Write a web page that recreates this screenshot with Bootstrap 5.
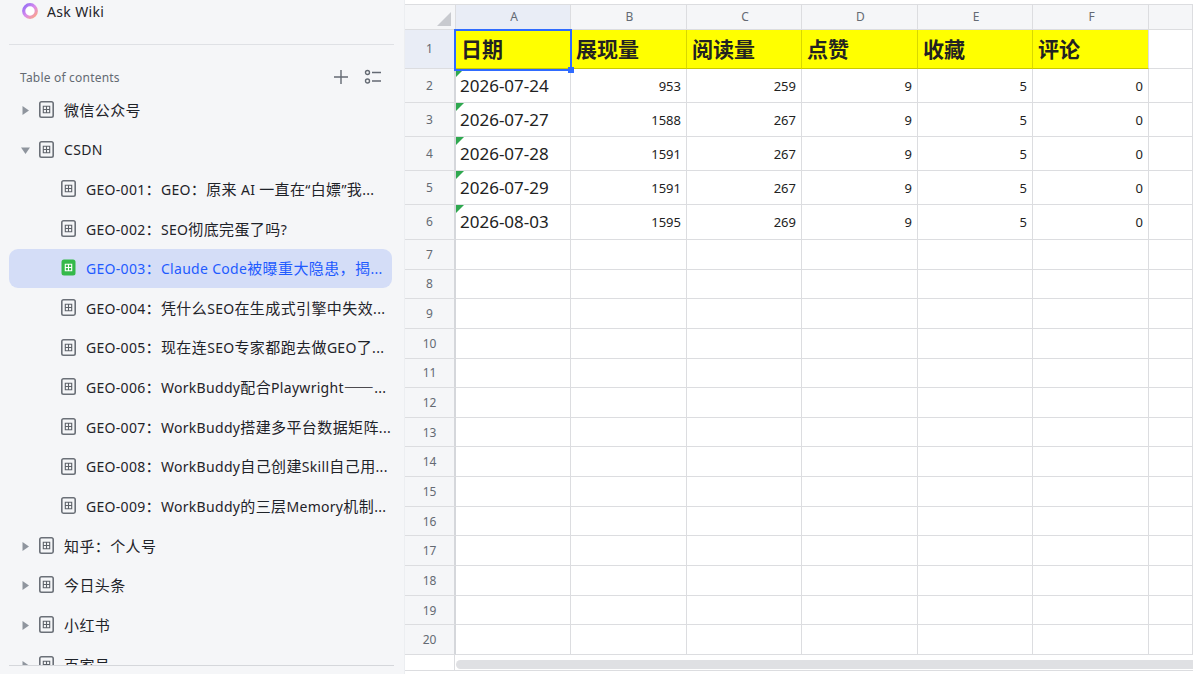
<!DOCTYPE html>
<html lang="zh"><head><meta charset="utf-8"><title>Ask Wiki</title>
<link href="https://cdn.jsdelivr.net/npm/bootstrap@5.3.0/dist/css/bootstrap.min.css" rel="stylesheet">
<style>
html,body{height:100%;margin:0}
body{width:1193px;height:674px;overflow:hidden;background:#fff;font-family:"Noto Sans","Noto Sans CJK SC",sans-serif;color:#1f2329}
.shell{height:674px}
.side{width:405px;flex:none;background:#f5f6f8;border-right:1px solid #eceef1;height:674px}
.ask{margin:0 10px 0 9px;padding:0 0 21px 12px;border-bottom:1px solid #dfe1e5;font-size:14px;line-height:23px;gap:8px;box-sizing:content-box;height:23px;letter-spacing:.35px}
.tochead{height:56px;padding:10px 22px 0 20px;color:#646a73;font-size:12px;letter-spacing:.2px}
.tochead .tools{gap:14px}
.tree{height:575px;overflow:hidden;margin:-10px 10px 0 9px;border-bottom:1px solid #d5d7db;padding:0}
.node{height:39.6px;font-size:14px;line-height:39px;white-space:nowrap;border-radius:9px;padding-left:8px;padding-right:1px;padding-bottom:2px;margin-right:2px;letter-spacing:.3px}
.zh{font-family:"Noto Sans CJK SC",sans-serif;font-size:15px;letter-spacing:.4px}
.arrow{width:14px;flex:none;display:flex;justify-content:center;margin-right:8px;margin-left:1px;margin-top:2px}
.node svg.ic{flex:none;margin-right:10px}
.top svg.ic{margin-left:-1px}
.sub{padding-left:52px}
.node.cur{background:#d4ddf7;color:#1f5bff;height:39px;margin-bottom:.6px}
.main{flex:1;min-width:0;position:relative;padding-top:4px;background:#fff}
.sheet{border-collapse:separate;border-spacing:0;table-layout:fixed;width:788px;font-size:13px}
.sheet td,.sheet th{border-right:1px solid #dcdde0;border-bottom:1px solid #dcdde0;padding:0 5px;overflow:hidden;white-space:nowrap;font-weight:400}
.sheet thead th{background:#f5f6f8;border-top:1px solid #dcdde0;color:#646a73;text-align:center;font-size:12px;height:26px;padding:0 4px 0 6px}
.sheet .corner{position:relative}
.corner i{position:absolute;right:4px;bottom:3px;width:0;height:0;border-left:14px solid transparent;border-bottom:14px solid #c8cacf}
.sheet tbody th{background:#f5f6f8;color:#646a73;text-align:center;font-size:12px;border-right:2px solid #d5d7db}
.sheet thead th.sel,.sheet tbody th.sel{background:#e9edf6}
.sheet .hdr td{background:#ff0;font-size:21px;font-weight:700;color:#222;height:39px;padding-top:2px;border-bottom-color:#c9c900;border-right-color:#d8d800}
.sheet .hdr td.hlast{border-right-color:#dcdde0}
.sheet .hdr td.blank{background:#fff;border-right-color:#dcdde0;border-bottom-color:#dcdde0}
.r1 td,.r1 th{height:34px}
.r1.tall td,.r1.tall th{height:35px}
.re td,.re th{height:29.65px}
.sheet .re th{padding-top:1px}
.sheet .num{text-align:right;color:#222;padding-top:2px}
.sheet .dt{font-size:17px;color:#222;position:relative;padding-left:4px}
.dt::before{content:"";position:absolute;left:0;top:0;border-top:8px solid #2fa84f;border-right:8px solid transparent}
.selbox{position:absolute;left:49px;top:29px;width:118px;height:42px;border:2px solid #2f6bff;pointer-events:none}
.selbox::after{content:"";position:absolute;right:-4px;bottom:-4px;width:6px;height:6px;background:#2f6bff}
.foot{position:absolute;left:0;top:655px;width:788px;height:16px;border-bottom:1px solid #dcdde0;display:flex}
.foot .gut{width:50px;border-right:1px solid #dcdde0;flex:none}
.bar{flex:1;background:#dfe0e3;height:9px;margin:5px 0 0 1px;border-radius:5px 0 0 5px}
</style></head><body>
<svg width="0" height="0" class="position-absolute"><defs>
<symbol id="doc" viewBox="0 0 15 17"><path d="M2.5 .8h10a1.700 1.700 0 0 1 1.700 1.700v12a1.700 1.700 0 0 1-1.700 1.700h-10A1.700 1.700 0 0 1 .8 14.500v-12A1.700 1.700 0 0 1 2.500 .8z" fill="none" stroke="#6b7078" stroke-width="1.600"/><path d="M4.300 5.300h6.400v6.400H4.300zM7.500 5.300v6.400M4.300 8.500h6.400" fill="none" stroke="#5d6269" stroke-width="1.100"/></symbol>
</defs></svg>
<div class="shell d-flex">
<aside class="side">
<div class="ask d-flex align-items-start"><svg width="18" height="18" viewBox="0 0 18 18" class="flex-none" style="margin-top:2px"><defs><linearGradient id="rg" x1="0" y1="0" x2="1" y2="1"><stop offset="0" stop-color="#8f6cf5"/><stop offset=".5" stop-color="#d98bee"/><stop offset="1" stop-color="#ffa77e"/></linearGradient></defs><circle cx="9" cy="9" r="6.300" fill="#fff" stroke="url(#rg)" stroke-width="3.200"/></svg><span>Ask Wiki</span></div>
<div class="tochead d-flex justify-content-between align-items-start">
<span style="line-height:24px;margin-top:11px">Table of contents</span>
<div class="tools d-flex" style="margin-top:13px">
<svg width="18" height="18" viewBox="0 0 18 18"><path d="M9 2v14M2 9h14" stroke="#646a73" stroke-width="1.400" fill="none"/></svg>
<svg width="18" height="18" viewBox="0 0 18 18" fill="none" stroke="#646a73" stroke-width="1.400"><circle cx="3.500" cy="4.500" r="2"/><circle cx="3.500" cy="13" r="2"/><path d="M8 4.500h9M8 13h9"/></svg>
</div></div>
<div class="tree">
<div class="node top d-flex align-items-center"><span class="arrow"><svg width="7" height="9" viewBox="0 0 7 9"><path d="M.5 0 7 4.500.5 9z" fill="#8f959e"/></svg></span><svg class="ic" width="15" height="17"><use href="#doc"/></svg><span class="zh">微信公众号</span></div>
<div class="node top d-flex align-items-center"><span class="arrow"><svg width="9" height="7" viewBox="0 0 9 7"><path d="M0 .5h9L4.500 7z" fill="#8f959e"/></svg></span><svg class="ic" width="15" height="17"><use href="#doc"/></svg><span>CSDN</span></div>
<div class="node sub d-flex align-items-center"><svg class="ic" width="15" height="17"><use href="#doc"/></svg><span>GEO-001<span class="zh">：</span>GEO<span class="zh">：原来</span> AI <span class="zh">一直在</span>“<span class="zh">白嫖</span>”<span class="zh">我</span>...</span></div>
<div class="node sub d-flex align-items-center"><svg class="ic" width="15" height="17"><use href="#doc"/></svg><span>GEO-002<span class="zh">：</span>SEO<span class="zh">彻底完蛋了吗</span>?</span></div>
<div class="node sub cur d-flex align-items-center"><svg class="ic" width="15" height="17" viewBox="0 0 15 17"><rect x=".5" y=".5" width="14" height="16" rx="2.500" fill="#34b94a"/><path d="M4.300 5.300h6.400v6.400H4.300zM7.500 5.300v6.400M4.300 8.500h6.400" fill="none" stroke="#fff" stroke-width="1.100"/></svg><span>GEO-003<span class="zh">：</span>Claude Code<span class="zh">被曝重大隐患，揭</span>...</span></div>
<div class="node sub d-flex align-items-center"><svg class="ic" width="15" height="17"><use href="#doc"/></svg><span>GEO-004<span class="zh">：凭什么</span>SEO<span class="zh">在生成式引擎中失效</span>...</span></div>
<div class="node sub d-flex align-items-center"><svg class="ic" width="15" height="17"><use href="#doc"/></svg><span>GEO-005<span class="zh">：现在连</span>SEO<span class="zh">专家都跑去做</span>GEO<span class="zh">了</span>...</span></div>
<div class="node sub d-flex align-items-center"><svg class="ic" width="15" height="17"><use href="#doc"/></svg><span>GEO-006<span class="zh">：</span>WorkBuddy<span class="zh">配合</span>Playwright<span class="zh">——</span>...</span></div>
<div class="node sub d-flex align-items-center"><svg class="ic" width="15" height="17"><use href="#doc"/></svg><span>GEO-007<span class="zh">：</span>WorkBuddy<span class="zh">搭建多平台数据矩阵</span>...</span></div>
<div class="node sub d-flex align-items-center"><svg class="ic" width="15" height="17"><use href="#doc"/></svg><span>GEO-008<span class="zh">：</span>WorkBuddy<span class="zh">自己创建</span>Skill<span class="zh">自己用</span>...</span></div>
<div class="node sub d-flex align-items-center"><svg class="ic" width="15" height="17"><use href="#doc"/></svg><span>GEO-009<span class="zh">：</span>WorkBuddy<span class="zh">的三层</span>Memory<span class="zh">机制</span>...</span></div>
<div class="node top d-flex align-items-center"><span class="arrow"><svg width="7" height="9" viewBox="0 0 7 9"><path d="M.5 0 7 4.500.5 9z" fill="#8f959e"/></svg></span><svg class="ic" width="15" height="17"><use href="#doc"/></svg><span class="zh">知乎：个人号</span></div>
<div class="node top d-flex align-items-center"><span class="arrow"><svg width="7" height="9" viewBox="0 0 7 9"><path d="M.5 0 7 4.500.5 9z" fill="#8f959e"/></svg></span><svg class="ic" width="15" height="17"><use href="#doc"/></svg><span class="zh">今日头条</span></div>
<div class="node top d-flex align-items-center"><span class="arrow"><svg width="7" height="9" viewBox="0 0 7 9"><path d="M.5 0 7 4.500.5 9z" fill="#8f959e"/></svg></span><svg class="ic" width="15" height="17"><use href="#doc"/></svg><span class="zh">小红书</span></div>
<div class="node top d-flex align-items-center"><span class="arrow"><svg width="7" height="9" viewBox="0 0 7 9"><path d="M.5 0 7 4.500.5 9z" fill="#8f959e"/></svg></span><svg class="ic" width="15" height="17"><use href="#doc"/></svg><span class="zh">百家号</span></div>
</div>
</aside>
<main class="main">
<table class="sheet">
<colgroup><col style="width:51px"><col style="width:115px"><col style="width:116px"><col style="width:115px"><col style="width:116px"><col style="width:115px"><col style="width:116px"><col></colgroup>
<thead><tr><th class="corner"><i></i></th><th class="sel">A</th><th>B</th><th>C</th><th>D</th><th>E</th><th>F</th><th></th></tr></thead>
<tbody>
<tr class="hdr"><th class="sel">1</th><td>日期</td><td>展现量</td><td>阅读量</td><td>点赞</td><td>收藏</td><td class="hlast">评论</td><td class="blank"></td></tr>
<tr class="r1"><th>2</th><td class="dt">2026-07-24</td><td class="num">953</td><td class="num">259</td><td class="num">9</td><td class="num">5</td><td class="num">0</td><td></td></tr>
<tr class="r1"><th>3</th><td class="dt">2026-07-27</td><td class="num">1588</td><td class="num">267</td><td class="num">9</td><td class="num">5</td><td class="num">0</td><td></td></tr>
<tr class="r1"><th>4</th><td class="dt">2026-07-28</td><td class="num">1591</td><td class="num">267</td><td class="num">9</td><td class="num">5</td><td class="num">0</td><td></td></tr>
<tr class="r1"><th>5</th><td class="dt">2026-07-29</td><td class="num">1591</td><td class="num">267</td><td class="num">9</td><td class="num">5</td><td class="num">0</td><td></td></tr>
<tr class="r1 tall"><th>6</th><td class="dt">2026-08-03</td><td class="num">1595</td><td class="num">269</td><td class="num">9</td><td class="num">5</td><td class="num">0</td><td></td></tr>
<tr class="re"><th>7</th><td></td><td></td><td></td><td></td><td></td><td></td><td></td></tr>
<tr class="re"><th>8</th><td></td><td></td><td></td><td></td><td></td><td></td><td></td></tr>
<tr class="re"><th>9</th><td></td><td></td><td></td><td></td><td></td><td></td><td></td></tr>
<tr class="re"><th>10</th><td></td><td></td><td></td><td></td><td></td><td></td><td></td></tr>
<tr class="re"><th>11</th><td></td><td></td><td></td><td></td><td></td><td></td><td></td></tr>
<tr class="re"><th>12</th><td></td><td></td><td></td><td></td><td></td><td></td><td></td></tr>
<tr class="re"><th>13</th><td></td><td></td><td></td><td></td><td></td><td></td><td></td></tr>
<tr class="re"><th>14</th><td></td><td></td><td></td><td></td><td></td><td></td><td></td></tr>
<tr class="re"><th>15</th><td></td><td></td><td></td><td></td><td></td><td></td><td></td></tr>
<tr class="re"><th>16</th><td></td><td></td><td></td><td></td><td></td><td></td><td></td></tr>
<tr class="re"><th>17</th><td></td><td></td><td></td><td></td><td></td><td></td><td></td></tr>
<tr class="re"><th>18</th><td></td><td></td><td></td><td></td><td></td><td></td><td></td></tr>
<tr class="re"><th>19</th><td></td><td></td><td></td><td></td><td></td><td></td><td></td></tr>
<tr class="re"><th>20</th><td></td><td></td><td></td><td></td><td></td><td></td><td></td></tr>
</tbody></table>
<div class="selbox"></div>
<div class="foot"><div class="gut"></div><div class="bar"></div></div>
</main>
</div>
<script src="https://cdn.jsdelivr.net/npm/bootstrap@5.3.0/dist/js/bootstrap.bundle.min.js"></script>
</body></html>
